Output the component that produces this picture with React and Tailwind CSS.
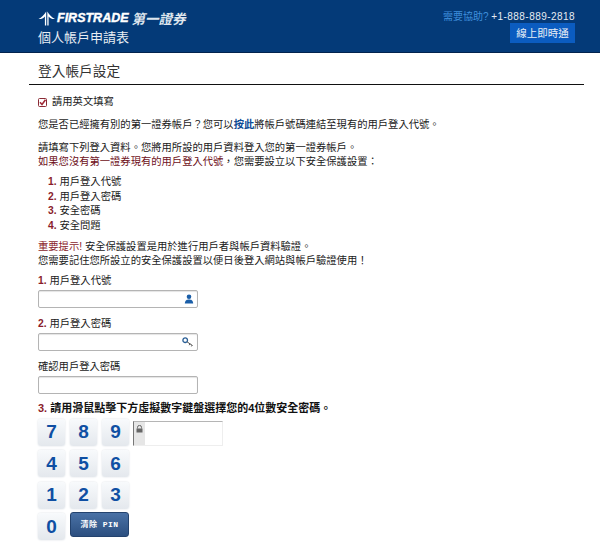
import React from 'react';

const font = { sans: "font-['Liberation_Sans','Noto_Sans_CJK_TC',sans-serif]" };

function PinKey({ n }) {
  return (
    <div className="w-[27px] h-[27px] rounded-[3px] bg-gradient-to-b from-[#f8fafc] to-[#e4e8ed] shadow-[0_0_2px_#d5dae0] flex items-center justify-center text-[#0f4fa3] text-[19px] font-bold">
      {n}
    </div>
  );
}

function Field({ icon }) {
  return (
    <div className="w-[160px] h-[18px] mt-[2px] bg-white border border-[#b4b4b4] rounded-[2px] shadow-[inset_0_1px_1px_#e4e4e4] flex items-center justify-end pr-[3px]">
      {icon}
    </div>
  );
}

function App() {
  return (
    <div className={`${font.sans} w-[600px] h-[546px] overflow-hidden bg-white text-[#1a1a1a] text-[10.3px] leading-[14px]`}>
      <div className="h-[53px] bg-[#043a78] border-b border-[#02234e] flex justify-between pl-[38px] pr-[25px]">
        <div className="pt-[9px]">
          <div className="flex items-center h-[18px]">
            <svg width="18" height="15" viewBox="0 0 18 15" className="text-white">
              <path d="M0.5 8 C3.5 6.5 6 4 8.2 0.5 L8.2 14.5 L6.9 14.5 L6.9 5.5 C5 7.5 3 8.3 0.5 8 Z" fill="currentColor" />
              <path d="M17 8 C14 6.5 11.5 4 9.3 0.5 L9.3 14.5 L10.6 14.5 L10.6 5.5 C12.5 7.5 14.5 8.3 17 8 Z" fill="currentColor" />
            </svg>
            <span className="ml-[1px] text-white italic font-bold text-[12.5px] font-['Liberation_Sans'] [-webkit-text-stroke:0.4px_white]">FIRSTRADE</span>
            <span className="ml-[3px] text-[#dfe6ee] italic font-bold text-[13.5px] font-['Noto_Sans_CJK_TC',serif]">第一證券</span>
          </div>
          <div className="mt-[2px] text-[#e8edf3] text-[13px] leading-[18px]">個人帳戶申請表</div>
        </div>
        <div className="pt-[10px] flex flex-col items-end">
          <div className="h-[14px] text-[10px]">
            <span className="text-[#3f8fdc]">需要協助? </span>
            <span className="text-[#e6ebf2] tracking-[0.45px]">+1-888-889-2818</span>
          </div>
          <div className="-mt-[1px] w-[65px] h-[20px] bg-[#0b5cc0] text-[#e8eef6] flex items-center justify-center text-[10.5px]">線上即時通</div>
        </div>
      </div>

      <div className="ml-[29px] w-[555px] h-[32px] border-b border-[#111] pl-[9px] pt-[9px] text-[13.7px] leading-[20px] text-[#333]">登入帳戶設定</div>

      <div className="pl-[38px]">
        <div className="mt-[10px] flex items-center h-[14px]">
          <svg width="9" height="9" viewBox="0 0 9 9" className="mr-[5px]">
            <rect x="0.5" y="0.5" width="8" height="8" rx="1" fill="#fff" stroke="#8a2a35" />
            <path d="M2 4.3 L4 6.5 L7.5 1.8" fill="none" stroke="#a12b38" strokeWidth="1.6" />
          </svg>
          <span>請用英文填寫</span>
        </div>

        <p className="mt-[9px]">
          您是否已經擁有別的第一證券帳戶&#xFF1F;您可以<span className="font-bold text-[#0d4a94]">按此</span>將帳戶號碼連結至現有的用戶登入代號。
        </p>

        <p className="mt-[9px]">請填寫下列登入資料。您將用所設的用戶資料登入您的第一證券帳戶。</p>
        <p><span className="text-[#6e1020]">如果您沒有第一證券現有的用戶登入代號</span>&#xFF0C;您需要設立以下安全保護設置&#xFF1A;</p>

        <ol className="mt-[6px] ml-[10px] leading-[14.7px]">
          <li><b className="text-[#8a1c2b]">1.</b> 用戶登入代號</li>
          <li><b className="text-[#8a1c2b]">2.</b> 用戶登入密碼</li>
          <li><b className="text-[#8a1c2b]">3.</b> 安全密碼</li>
          <li><b className="text-[#8a1c2b]">4.</b> 安全問題</li>
        </ol>

        <p className="mt-[6px]"><span className="text-[#8a1c2b]">重要提示!</span> 安全保護設置是用於進行用戶者與帳戶資料驗證。</p>
        <p>您需要記住您所設立的安全保護設置以便日後登入網站與帳戶驗證使用&#xFF01;</p>

        <div className="mt-[6px]"><b className="text-[#8a1c2b]">1.</b> 用戶登入代號</div>
        <Field icon={
          <svg width="10" height="10" viewBox="0 0 10 10">
            <circle cx="5" cy="2.8" r="2.3" fill="#1a5ea8" />
            <path d="M0.8 9.5 C1 6 3 5.4 5 5.4 C7 5.4 9 6 9.2 9.5 Z" fill="#1a5ea8" />
          </svg>
        } />

        <div className="mt-[9px]"><b className="text-[#8a1c2b]">2.</b> 用戶登入密碼</div>
        <Field icon={
          <svg width="12" height="10" viewBox="0 0 12 10">
            <circle cx="3.2" cy="3.2" r="2.3" fill="none" stroke="#2a5f96" strokeWidth="1.3" />
            <path d="M5 4.8 L10.5 8.5 M8 6.8 L7.2 8.2 M10 8.2 L9.4 9.4" fill="none" stroke="#555" strokeWidth="1" />
          </svg>
        } />

        <div className="mt-[9px]">確認用戶登入密碼</div>
        <Field />

        <div className="mt-[7px] font-bold text-[11px] text-[#111]"><span className="text-[#8a1c2b]">3.</span> 請用滑鼠點擊下方虛擬數字鍵盤選擇您的4位數安全密碼。</div>

        <div className="mt-[4px] flex items-start">
          <div className="grid grid-cols-3 gap-x-[5px] gap-y-[4.5px] w-[91px]">
            {[7, 8, 9, 4, 5, 6, 1, 2, 3, 0].map((n) => <PinKey key={n} n={n} />)}
            <div className="col-span-2 h-[25px] -mt-[1px] rounded-[3px] bg-gradient-to-b from-[#4a72a6] to-[#2c4f80] border border-[#24436e] text-white text-[8px] font-bold tracking-[0.5px] flex items-center justify-center font-['Liberation_Mono','Noto_Sans_CJK_TC',monospace]">清除 PIN</div>
          </div>
          <div className="ml-[4px] mt-[2px] w-[90px] h-[25px] border border-[#eeeeee] border-t-[#b5b5b5] border-l-[#777] flex bg-white">
            <div className="w-[11px] bg-[#e6e6e6] flex justify-center pt-[3px]">
              <svg width="7" height="8" viewBox="0 0 7 8">
                <path d="M1.5 3.5 V2.4 a2 2 0 0 1 4 0 V3.5" fill="none" stroke="#666" strokeWidth="1" />
                <rect x="0.5" y="3.5" width="6" height="4" fill="#666" />
              </svg>
            </div>
          </div>
        </div>
      </div>
    </div>
  );
}

export default App;
